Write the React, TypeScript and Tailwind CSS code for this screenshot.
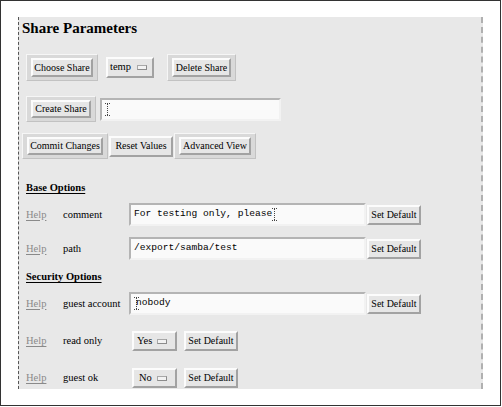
const serif = "font-['Liberation_Serif','Times_New_Roman',serif]";
const mono = "font-['Liberation_Mono','Courier_New',monospace]";

function IBeam() {
  return (
    <svg width="5" height="13" viewBox="0 0 5 13" className="shrink-0">
      <path d="M0 0.5h5M2.5 1v11M0 12.5h5" stroke="#444" strokeWidth="1" strokeDasharray="1 1" fill="none" />
    </svg>
  );
}

function FramedButton({ label, className }: { label: string; className: string }) {
  return (
    <div className={`flex shrink-0 border border-t-[#f6f6f6] border-l-[#f6f6f6] border-b-[#c2c2c2] border-r-[#c2c2c2] bg-[#d9d9d9] px-[4px] py-[3px] ${className}`}>
      <button type="button" className="flex h-full w-full items-center justify-center whitespace-nowrap border-2 border-t-[#fcfcfc] border-l-[#fcfcfc] border-b-[#a2a2a2] border-r-[#a2a2a2] bg-[#e6e6e6] text-[10px] leading-none text-black">
        {label}
      </button>
    </div>
  );
}

function PlainButton({ label, className }: { label: string; className: string }) {
  return (
    <button type="button" className={`flex shrink-0 items-center justify-center whitespace-nowrap border-2 border-t-[#fcfcfc] border-l-[#fcfcfc] border-b-[#a2a2a2] border-r-[#a2a2a2] bg-[#e6e6e6] text-[10px] leading-none text-black ${className}`}>
      {label}
    </button>
  );
}

function OptionMenu({ value, className }: { value: string; className: string }) {
  return (
    <div className={`flex shrink-0 items-center border-2 border-t-[#fcfcfc] border-l-[#fcfcfc] border-b-[#a2a2a2] border-r-[#a2a2a2] bg-[#e6e6e6] text-[10.5px] leading-none text-black ${className}`}>
      <span>{value}</span>
      <span className="ml-auto h-[5px] w-[10px] border border-t-[#a8a8a8] border-l-[#a8a8a8] border-b-[#8c8c8c] border-r-[#8c8c8c] bg-[#f2f2f2]" />
    </div>
  );
}

function TextBox({ className, children }: { className: string; children?: React.ReactNode }) {
  return (
    <div className={`flex shrink-0 items-center whitespace-pre border-2 border-t-[#b4b4b4] border-l-[#b4b4b4] border-b-[#f2f2f2] border-r-[#f2f2f2] bg-[#fafafa] pl-[3px] text-[9.6px] text-black ${mono} ${className}`}>
      {children}
    </div>
  );
}

function SectionTitle({ title, className }: { title: string; className: string }) {
  return (
    <p className={`ml-[7px] h-[13px] text-[10.5px] leading-[13px] font-bold text-black underline underline-offset-[2px] ${className}`}>{title}</p>
  );
}

function OptionRow({ label, className, children }: { label: string; className: string; children: React.ReactNode }) {
  return (
    <div className={`ml-[7px] flex items-center ${className}`}>
      <a className="w-[37px] shrink-0 text-[10.5px] text-[#8a8a8a] underline underline-offset-[2px]">Help</a>
      <span className="w-[66px] shrink-0 text-[10.5px] text-black">{label}</span>
      {children}
    </div>
  );
}

export default function App() {
  return (
    <div className={`h-[407px] w-[502px] bg-white ${serif}`}>
      <div className="h-[406px] w-[501px] border border-[#333] pl-[17px] pt-[16px]">
        <div className="flex h-[372px] w-[465px] flex-col border-l border-r-2 border-dashed border-l-[#555] border-r-[#b0b0b0] bg-[#e8e8e8]">
          <h1 className="ml-[3px] mt-[2px] h-[18px] text-[15px] leading-[18px] font-bold text-black">Share Parameters</h1>

          <div className="ml-[7px] mt-[17px] flex items-center">
            <FramedButton label="Choose Share" className="h-[27px] w-[72px]" />
            <OptionMenu value="temp" className="ml-[8px] h-[21px] w-[48px] pl-[2px] pr-[5px]" />
            <FramedButton label="Delete Share" className="ml-[13px] h-[27px] w-[69px]" />
          </div>

          <div className="ml-[7px] mt-[15px] flex items-center">
            <FramedButton label="Create Share" className="h-[26px] w-[70px]" />
            <TextBox className="ml-[4px] h-[23px] w-[181px]">
              <IBeam />
            </TextBox>
          </div>

          <div className="ml-[3px] mt-[11px] flex items-center">
            <FramedButton label="Commit Changes" className="h-[26px] w-[86px]" />
            <PlainButton label="Reset Values" className="ml-[1px] h-[21px] w-[64px]" />
            <FramedButton label="Advanced View" className="ml-[1px] h-[26px] w-[82px]" />
          </div>

          <SectionTitle title="Base Options" className="mt-[22px]" />

          <OptionRow label="comment" className="mt-[9px]">
            <TextBox className="h-[23px] w-[237px]">
              <span>For testing only, please</span>
              <IBeam />
            </TextBox>
            <PlainButton label="Set Default" className="ml-[1px] h-[20px] w-[54px]" />
          </OptionRow>

          <OptionRow label="path" className="mt-[11px]">
            <TextBox className="h-[23px] w-[237px]">
              <span>/export/samba/test</span>
            </TextBox>
            <PlainButton label="Set Default" className="ml-[1px] h-[20px] w-[54px]" />
          </OptionRow>

          <SectionTitle title="Security Options" className="mt-[10px]" />

          <OptionRow label="guest account" className="mt-[9px]">
            <TextBox className="h-[23px] w-[237px]">
              <IBeam />
              <span className="-ml-[3px]">nobody</span>
            </TextBox>
            <PlainButton label="Set Default" className="ml-[1px] h-[20px] w-[54px]" />
          </OptionRow>

          <OptionRow label="read only" className="mt-[16px]">
            <OptionMenu value="Yes" className="ml-[3px] h-[20px] w-[45px] pl-[3px] pr-[8px]" />
            <PlainButton label="Set Default" className="ml-[7px] h-[20px] w-[54px]" />
          </OptionRow>

          <OptionRow label="guest ok" className="mt-[17px]">
            <OptionMenu value="No" className="ml-[3px] h-[20px] w-[45px] pl-[5px] pr-[8px]" />
            <PlainButton label="Set Default" className="ml-[7px] h-[20px] w-[54px]" />
          </OptionRow>
        </div>
      </div>
    </div>
  );
}
